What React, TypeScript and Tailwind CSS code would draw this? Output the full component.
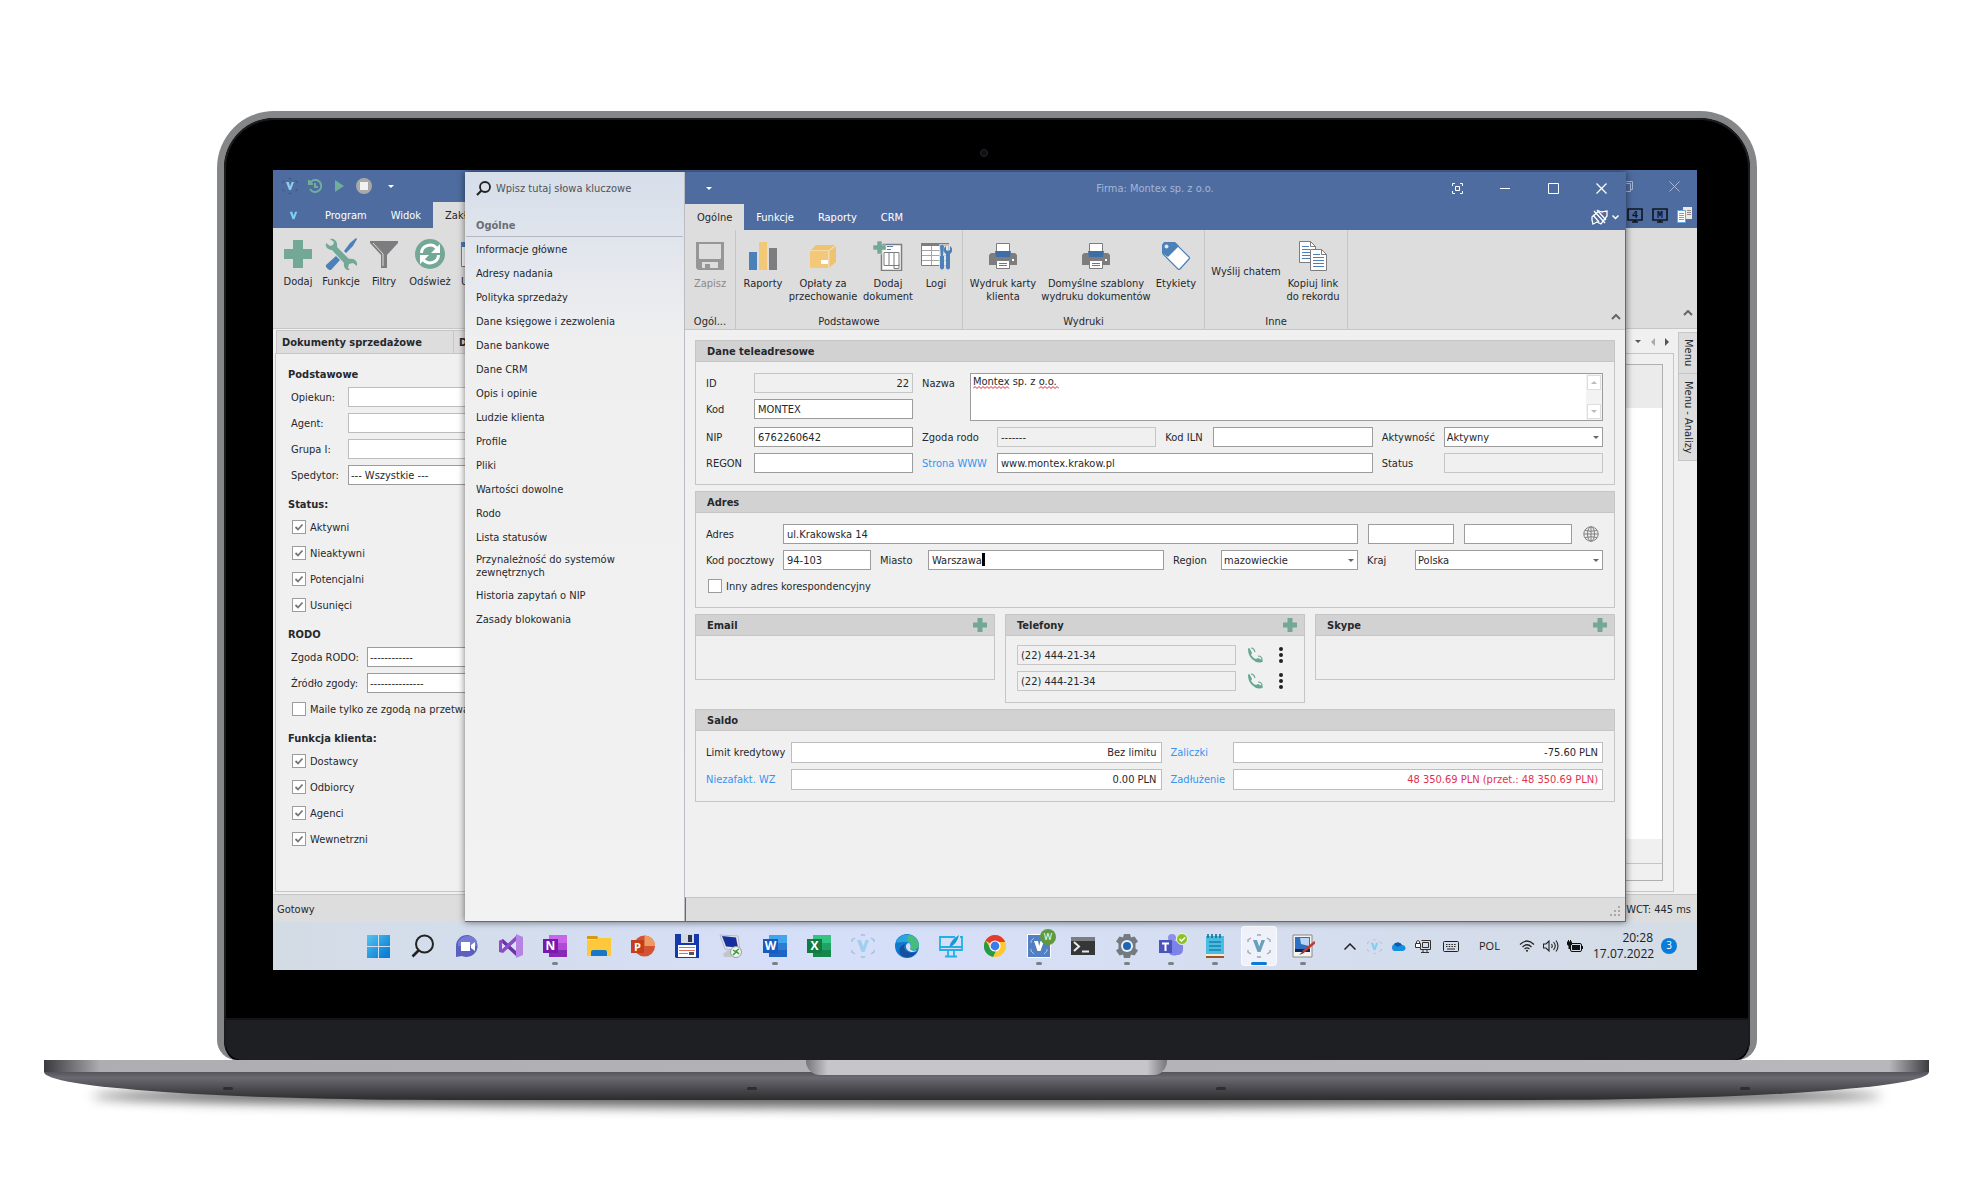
import React from 'react';

const GREEN = '#73a896';
const BLUE = '#4c80b9';
const GREY = '#7d7d7f';

/* ---------- small shared drawings ---------- */

function Caret({ className = '' }: { className?: string }) {
  return (
    <svg className={className} width="6" height="3" viewBox="0 0 6 3" fill="currentColor" aria-hidden="true">
      <path d="M0 0h6L3 3z" />
    </svg>
  );
}

function ChevronUp() {
  return (
    <svg width="10" height="6" viewBox="0 0 10 6" fill="none" stroke="#666" strokeWidth="2" aria-hidden="true">
      <path d="M1 5l4-4 4 4" />
    </svg>
  );
}

function Plus({ size }: { size: number }) {
  return (
    <svg width={size} height={size} viewBox="0 0 28 28" fill={GREEN} aria-hidden="true">
      <path d="M9 0h10v9h9v10h-9v9H9v-9H0V9h9z" />
    </svg>
  );
}

function VLogo({ size, color = '#7fd0ee', frame = '#3c5680' }: { size: number; color?: string; frame?: string }) {
  return (
    <svg width={size} height={size} viewBox="0 0 24 24" aria-hidden="true">
      <g fill="none" stroke={frame} strokeWidth="1.5">
        <path d="M1 8V6l3-2M20 4l3 2v2M23 16v2l-3 2M4 20l-3-2v-2M10 1.5l2-1 2 1M10 22.5l2 1 2-1" />
      </g>
      <path d="M6 6h4l2.200 6.500L14.500 6H18l-4.500 12h-3z" fill={color} />
    </svg>
  );
}

/* ---------- ribbon icons ---------- */

const IconTools = () => (
  <svg width="32" height="32" viewBox="0 0 32 32" aria-hidden="true">
    <path d="M1 27l10-9 4 4-9 10c-2 1-6-3-5-5z" fill={BLUE} />
    <path d="M19 13l6-8 6-5 1 1-4 7-7 7z" fill={BLUE} />
    <path d="M5 1c4-1 8 2 7 8l12 12c6-1 9 3 8 7l-4-3-4 1-1 4 3 3c-5 0-8-4-7-8L7 12c-4 0-7-3-6-7l4 3 3-1 1-3z" fill={GREEN} />
  </svg>
);
const IconFilter = () => (
  <svg width="28" height="28" viewBox="0 0 28 28" aria-hidden="true">
    <path d="M0 1h28v2L17 15v13h-6V15L0 3z" fill={GREY} />
    <path d="M3 3l10 11v12" stroke="#ddd" strokeWidth="1" fill="none" />
  </svg>
);
const IconRefresh = () => (
  <svg width="30" height="30" viewBox="0 0 30 30" aria-hidden="true">
    <circle cx="15" cy="15" r="15" fill={GREEN} />
    <g fill="none" stroke="#fff" strokeWidth="3">
      <path d="M6.500 14a8.500 8 0 0 1 15-5" />
      <path d="M23.500 16a8.500 8 0 0 1-15 5" />
    </g>
    <path d="M25 5v9h-9zM5 25v-9h9z" fill="#fff" />
  </svg>
);
const IconWindow = () => (
  <svg width="28" height="28" viewBox="0 0 28 28" aria-hidden="true">
    <path d="M.5 2.500h27v24H.5z" fill="#fff" stroke={GREY} />
    <path d="M0 2h28v5H0z" fill={BLUE} />
  </svg>
);
const IconSave = () => (
  <svg width="28" height="28" viewBox="0 0 28 28" fill="#969698" aria-hidden="true">
    <path fillRule="evenodd" d="M0 0h28v28H2l-2-2zM3 2v14q0 1 1 1h20q1 0 1-1V2zM6 20v6h16v-6z" />
    <path d="M9 22h5v5H9z" />
  </svg>
);
const IconBars = () => (
  <svg width="28" height="28" viewBox="0 0 28 28" aria-hidden="true">
    <path d="M0 10h8v18H0z" fill={BLUE} />
    <path d="M10 0h8v28h-8z" fill="#f3c979" />
    <path d="M20 6h8v22h-8z" fill={GREY} />
  </svg>
);
const IconBox = () => (
  <svg width="28" height="28" viewBox="0 0 28 28" aria-hidden="true">
    <path d="M1 9h18v17H3l-2-1z" fill="#f3c979" />
    <path d="M2 8l5-5h19l-6 5zM20 9l7-5v16l-7 6z" fill="#efc272" />
    <path d="M2 8.500h18V26M20 8.500l7-5" stroke="#f7dba5" fill="none" />
    <path d="M12 18h7v4h-7z" fill="#fff" />
  </svg>
);
const IconAddDoc = () => (
  <svg width="30" height="30" viewBox="0 0 30 30" aria-hidden="true">
    <path d="M8.500 3.500h20v26h-20z" fill="#fff" stroke={GREY} strokeWidth="1.500" />
    <path d="M11 11.500h15v13H11zM16 11.500v13M21 11.500v16h5v-4" fill="none" stroke={GREY} />
    <path d="M14 5.500h6M14 8.500h4" stroke={BLUE} />
    <path d="M4 0h5v4h4v5H9v4H4V9H0V4h4z" fill={GREEN} stroke="#ddd" strokeWidth=".6" />
  </svg>
);
const IconLogs = () => (
  <svg width="31" height="28" viewBox="0 0 31 28" aria-hidden="true">
    <path d="M.5 2.500h27v21H.5z" fill="#fff" stroke={GREY} />
    <path d="M0 1h28v3H0z" fill={GREY} />
    <path d="M1 8.500h26M1 13.500h26M1 18.500h26M10.500 4v19M19.500 4v19" stroke="#a5a5a5" />
    <path d="M18 2h13v26H18z" fill="#ddd" opacity=".7" />
    <path d="M19 4q2-2 4 0l-1 10h1v12q-2 3-4 0V14h1zM25 4v4l2 1 2-1V4c3 2 3 6 0 8v14q-2 3-4 0V12c-3-2-3-6 0-8z" fill={BLUE} />
  </svg>
);
const IconPrinter = () => (
  <svg width="28" height="26" viewBox="0 0 28 26" aria-hidden="true">
    <path d="M2 10h24l2 2v10H0V12z" fill={GREY} />
    <path d="M7.500.5h13v9h-13z" fill="#fff" stroke={GREY} />
    <path d="M6 8h16l-1 6H7z" fill="#3d6fa6" />
    <path d="M7.500 17.500h13v8h-13z" fill="#fff" stroke={GREY} />
    <path d="M10 20.500h8M10 22.500h8" stroke={BLUE} />
    <path d="M23 16h2v2h-2z" fill="#fff" />
  </svg>
);
const IconTag = () => (
  <svg width="28" height="28" viewBox="0 0 28 28" aria-hidden="true">
    <path d="M3 1h10l14 14q1 1 0 2L18 27q-1 1-2 0L1 12V3z" fill="#fff" stroke={BLUE} strokeWidth="1.200" />
    <path d="M2 0h11l4 4L6 15 0 11V3z" fill={BLUE} />
    <circle cx="4.500" cy="4.500" r="2" fill="#dde6f0" />
  </svg>
);
const IconCopyDocs = () => (
  <svg width="28" height="30" viewBox="0 0 28 30" aria-hidden="true">
    <path d="M.5.5h11l5 5v16H.5z" fill="#fff" stroke={GREY} />
    <path d="M11.500.5v5h5" fill="none" stroke={GREY} />
    <path d="M3 5.500h7M3 8.500h8M3 11.500h8M3 14.500h8M3 17.500h8" stroke={BLUE} />
    <path d="M11.500 8.500h11l5 5v16h-16z" fill="#fff" stroke={GREY} />
    <path d="M22.500 8.500v5h5" fill="none" stroke={GREY} />
    <path d="M14 13.500h7M14 16.500h11M14 19.500h11M14 22.500h11M14 25.500h11" stroke={BLUE} />
  </svg>
);
const IconPhone = () => (
  <svg width="15" height="16" viewBox="0 0 15 16" aria-hidden="true">
    <path d="M0 2q1-2 2 0l2 4-1 2q2 3 5 4l2-1 4 2q2 1 0 2Q9 17 4 12 0 8 0 2z" fill="#66a78f" />
    <path d="M3 1q3 0 4 4M10 9q4 0 4 4" fill="none" stroke="#66a78f" strokeWidth="1.200" />
  </svg>
);
const IconGlobe = () => (
  <svg width="16" height="16" viewBox="0 0 16 16" fill="none" stroke="#808080" aria-hidden="true">
    <circle cx="8" cy="8" r="7.200" />
    <ellipse cx="8" cy="8" rx="3.500" ry="7.200" />
    <path d="M8 1v14M1 8h14M2 4.500q6 1.500 12 0M2 11.500q6-1.500 12 0" />
  </svg>
);

/* ---------- form building blocks ---------- */

type FieldProps = { id: string; label: string; value?: string; readOnly?: boolean; right?: boolean; red?: boolean; className?: string };

function Field({ id, label, value = '', readOnly = false, right = false, red = false, className = '' }: FieldProps) {
  return (
    <input
      id={id}
      aria-label={label}
      defaultValue={value}
      readOnly={readOnly}
      className={`block h-5 w-full min-w-0 border px-[3px] outline-none ${readOnly ? 'border-[#c6c6c6] bg-[#f0f0f0]' : 'border-[#9c9c9c] bg-white'} ${right ? 'text-right' : ''} ${red ? 'text-[#e0314f]' : ''} ${className}`}
    />
  );
}

function Select({ id, label, value, className = '' }: { id: string; label: string; value: string; className?: string }) {
  return (
    <div className={`relative min-w-0 ${className}`}>
      <select id={id} aria-label={label} className="block h-5 w-full appearance-none border border-[#9c9c9c] bg-white px-0.5 outline-none">
        <option>{value}</option>
      </select>
      <Caret className="pointer-events-none absolute top-[9px] right-1 text-[#666]" />
    </div>
  );
}

function Section({ title, add = false, children }: { title: string; add?: boolean; children?: React.ReactNode }) {
  return (
    <section className="border border-[#c6c6c6]">
      <header className="flex h-[21px] items-center justify-between border-b border-[#c6c6c6] bg-[#d2d2d2] pr-[7px] pl-[11px]">
        <h2 className="font-bold">{title}</h2>
        {add && (
          <button type="button" aria-label={`${title}: dodaj`}>
            <Plus size={14} />
          </button>
        )}
      </header>
      {children}
    </section>
  );
}

function Check({ label, checked = false }: { label: string; checked?: boolean }) {
  return (
    <label className="flex h-5 items-center gap-1 whitespace-nowrap">
      <span className="relative block size-3.5 flex-none">
        <input type="checkbox" defaultChecked={checked} className="peer block size-3.5 appearance-none border border-[#9c9c9c] bg-white" />
        <svg className="pointer-events-none absolute inset-0 hidden peer-checked:block" width="14" height="14" viewBox="0 0 14 14" fill="none" stroke="#777" strokeWidth="1.800" aria-hidden="true">
          <path d="M3.500 7l2.500 2.500L10.500 4.500" />
        </svg>
      </span>
      {label}
    </label>
  );
}

function RibbonButton({ icon, lines, width, muted = false }: { icon: React.ReactNode; lines: string[]; width: string; muted?: boolean }) {
  return (
    <button type="button" className={`flex flex-none flex-col items-center whitespace-nowrap leading-[13px] ${width} ${muted ? 'text-[#8a8a8a]' : ''}`}>
      <span className="mb-1.5 flex h-[30px] items-center justify-center">{icon}</span>
      {lines.map((l) => (
        <span key={l}>{l}</span>
      ))}
    </button>
  );
}

function RibbonGroup({ title, width, pad, children }: { title: string; width: string; pad: string; children: React.ReactNode }) {
  return (
    <div className={`flex flex-none flex-col border-r border-[#c6c6c6] ${width}`}>
      <div className={`flex flex-1 items-start pt-[11px] ${pad}`}>{children}</div>
      <div className="h-3.5 truncate text-center">{title}</div>
    </div>
  );
}

/* ---------- background window ---------- */

function BackWindow() {
  return (
    <div className="flex h-full flex-col bg-[#f0f0f0]">
      <div className="flex h-8 flex-none items-center justify-between bg-[#4e6c9f] pr-[17px] pl-[9px]">
        <div className="flex items-center">
          <VLogo size={16} color="#8ecbe6" />
          <svg className="ml-2.5" width="14" height="14" viewBox="0 0 14 14" fill="none" stroke="#6fae98" strokeWidth="2" aria-hidden="true">
            <path d="M1 1v4h4M1.500 5A6 6 0 1 1 2 10M7 4v4h3" />
          </svg>
          <svg className="ml-[13px]" width="9" height="12" viewBox="0 0 9 12" fill="#6fae98" aria-hidden="true">
            <path d="M0 0l9 6-9 6z" />
          </svg>
          <svg className="ml-3" width="16" height="16" viewBox="0 0 16 16" aria-hidden="true">
            <circle cx="8" cy="8" r="8" fill="#a9a9a9" />
            <path d="M4 4h8v8H4z" fill="#f2f2f2" />
          </svg>
          <Caret className="ml-4 text-white" />
        </div>
        <div className="flex items-center gap-9 text-[#a5b5d2]">
          <svg width="11" height="11" viewBox="0 0 11 11" fill="none" stroke="currentColor" aria-hidden="true">
            <path d="M.5 2.500h8v8h-8zM2.500 2.500v-2h8v8h-2" />
          </svg>
          <svg width="11" height="11" viewBox="0 0 11 11" fill="none" stroke="currentColor" aria-hidden="true">
            <path d="M.5.5l10 10M10.500.5l-10 10" />
          </svg>
        </div>
      </div>
      <div className="flex h-[26px] flex-none items-stretch justify-between bg-[#4e6c9f] text-white">
        <nav className="flex items-stretch">
          <span className="flex w-10 items-center justify-center">
            <VLogo size={15} frame="#4e6c9f" />
          </span>
          <button type="button" className="px-3">Program</button>
          <button type="button" className="px-3">Widok</button>
          <button type="button" className="bg-[#ddd] px-3 text-[#26282c]">Zakł</button>
        </nav>
        <div className="flex items-center gap-[9px] pr-[5px]">
          {['4', 'M'].map((t) => (
            <svg key={t} width="16" height="15" viewBox="0 0 16 15" aria-hidden="true">
              <path d="M1 1h14v11H1zM5 14h6M8 12v2" fill="none" stroke="#10141c" strokeWidth="1.600" />
              <text x="8" y="10" fontSize="10" fontWeight="700" textAnchor="middle" fontFamily="Liberation Mono, monospace" fill="#10141c">{t}</text>
            </svg>
          ))}
          <svg width="15" height="16" viewBox="0 0 15 16" aria-hidden="true">
            <path d="M6 0h9v12H6z" fill="#efe9df" />
            <path d="M10 3.500h4M10 5.500h4M10 7.500h4" stroke="#8d8a85" />
            <path d="M.5 3.500h8v12h-8z" fill="#fff" stroke="#67a5e0" />
            <path d="M2 6.500h5M2 8.500h5M2 10.500h5M2 12.500h5" stroke="#67a5e0" />
          </svg>
        </div>
      </div>
      <div className="flex h-[101px] flex-none justify-between border-b border-[#c6c6c6] bg-[#ddd] pt-[11px] pl-[3px]">
        <div className="flex items-start">
          <RibbonButton icon={<Plus size={28} />} lines={['Dodaj']} width="w-11" />
          <RibbonButton icon={<IconTools />} lines={['Funkcje']} width="w-[42px]" />
          <RibbonButton icon={<IconFilter />} lines={['Filtry']} width="w-11" />
          <RibbonButton icon={<IconRefresh />} lines={['Odśwież']} width="w-12" />
          <button type="button" className="ml-[7px] flex w-7 flex-col items-start leading-[13px]">
            <span className="mb-1.5 flex h-[30px] items-center"><IconWindow /></span>
            <span className="w-1 overflow-hidden">U</span>
          </button>
        </div>
        <div className="self-end pr-1 pb-3">
          <ChevronUp />
        </div>
      </div>

      <div className="flex min-h-0 flex-1">
        <div className="flex min-w-0 flex-1 flex-col pl-0.5">
          <div className="flex h-6 flex-none items-stretch justify-between pt-px">
            <div className="flex pl-px font-bold">
              <div className="flex w-[178px] items-center border border-b-0 border-[#c6c6c6] bg-[#ddd] pl-[5px]">Dokumenty sprzedażowe</div>
              <div className="flex w-12 items-center border border-b-0 border-l-0 border-[#c6c6c6] bg-[#ddd] pl-[5px]">
                <span className="w-1.5 overflow-hidden">D</span>
              </div>
            </div>
            <div className="flex items-center gap-2.5 pr-[5px] text-[#555]">
              <Caret />
              <svg width="4" height="8" viewBox="0 0 4 8" fill="#aaa" aria-hidden="true"><path d="M4 0v8L0 4z" /></svg>
              <svg width="4" height="8" viewBox="0 0 4 8" fill="#555" aria-hidden="true"><path d="M0 0v8l4-4z" /></svg>
            </div>
          </div>
          <div className="mb-0.5 flex min-h-0 flex-1 border border-[#c6c6c6]">
            <form className="w-[240px] flex-none overflow-hidden pl-3">
              <h3 className="mt-[11px] h-5 font-bold leading-5">Podstawowe</h3>
              <div className="mt-0.5 ml-[3px] grid grid-cols-[57px_1fr] items-center gap-y-1.5">
                <label htmlFor="opiekun">Opiekun:</label>
                <Field id="opiekun" label="Opiekun" className="border-[#bdbdbd]!" />
                <label htmlFor="agent">Agent:</label>
                <Field id="agent" label="Agent" className="border-[#bdbdbd]!" />
                <label htmlFor="grupa">Grupa I:</label>
                <Field id="grupa" label="Grupa I" className="border-[#bdbdbd]!" />
                <label htmlFor="spedytor">Spedytor:</label>
                <Select id="spedytor" label="Spedytor" value="--- Wszystkie ---" />
              </div>
              <h3 className="mt-2.5 h-5 font-bold leading-5">Status:</h3>
              <div className="mt-0.5 flex flex-col gap-1.5 pl-1">
                <Check label="Aktywni" checked />
                <Check label="Nieaktywni" checked />
                <Check label="Potencjalni" checked />
                <Check label="Usunięci" checked />
              </div>
              <h3 className="mt-2.5 h-5 font-bold leading-5">RODO</h3>
              <div className="mt-0.5 ml-[3px] grid grid-cols-[76px_1fr] items-center gap-y-1.5">
                <label htmlFor="zgodaRodo">Zgoda RODO:</label>
                <Select id="zgodaRodo" label="Zgoda RODO" value="------------" />
                <label htmlFor="zrodlo">Źródło zgody:</label>
                <Select id="zrodlo" label="Źródło zgody" value="---------------" />
              </div>
              <div className="mt-1.5 pl-1">
                <Check label="Maile tylko ze zgodą na przetwar" />
              </div>
              <h3 className="mt-2.5 h-5 font-bold leading-5">Funkcja klienta:</h3>
              <div className="mt-0.5 flex flex-col gap-1.5 pl-1">
                <Check label="Dostawcy" checked />
                <Check label="Odbiorcy" checked />
                <Check label="Agenci" checked />
                <Check label="Wewnetrzni" checked />
              </div>
            </form>
            <div className="mt-2.5 mr-2.5 mb-2.5 flex flex-1 flex-col border border-[#b0b0b0] bg-white">
              <div className="h-[43px] bg-[#ebebeb]" />
              <div className="flex-1" />
              <div className="h-[25px] border-b border-[#c6c6c6] bg-[#f0f0f0]" />
              <div className="h-4 bg-[#f0f0f0]" />
            </div>
          </div>
        </div>
        <aside className="w-[23px] flex-none pt-[3px] pl-1 text-[#26282c]">
          <button type="button" className="flex h-[42px] w-full items-center justify-center border border-r-0 border-[#c6c6c6] bg-[#ddd] [writing-mode:vertical-rl]">Menu</button>
          <button type="button" className="flex h-[87px] w-full items-center justify-center border border-t-0 border-r-0 border-[#c6c6c6] bg-[#ddd] [writing-mode:vertical-rl]">Menu - Analizy</button>
        </aside>
      </div>
      <footer className="flex h-7 flex-none items-center justify-between border-t border-[#c6c6c6] bg-[#ddd] pt-0.5 pr-1.5 pl-1">
        <span>Gotowy</span>
        <span>WCT: 445 ms</span>
      </footer>
    </div>
  );
}

/* ---------- company window ---------- */

const MENU = [
  'Informacje główne', 'Adresy nadania', 'Polityka sprzedaży', 'Dane księgowe i zezwolenia', 'Dane bankowe', 'Dane CRM',
  'Opis i opinie', 'Ludzie klienta', 'Profile', 'Pliki', 'Wartości dowolne', 'Rodo', 'Lista statusów',
  'Przynależność do systemów zewnętrznych', 'Historia zapytań o NIP', 'Zasady blokowania',
];

function SideMenu() {
  return (
    <aside className="flex w-[220px] flex-none flex-col border-r border-[#b9bcc2] bg-linear-to-b from-[#d6deea] via-[#efeff0] via-22% to-[#f2f2f2]">
      <div className="flex h-8 items-center gap-[5px] pl-[11px]">
        <svg width="15" height="15" viewBox="0 0 15 15" fill="none" stroke="#222" strokeWidth="1.800" aria-hidden="true">
          <circle cx="9" cy="6" r="5" />
          <path d="M5.500 9.500L1 14" strokeWidth="2.200" />
        </svg>
        <input aria-label="Szukaj" placeholder="Wpisz tutaj słowa kluczowe" className="min-w-0 flex-1 bg-transparent outline-none placeholder:text-[#505358]" />
      </div>
      <h2 className="mx-px mt-3 h-[21px] border-b border-[#b4b8be] pl-2.5 font-bold leading-[19px] text-[#6b6e73]">Ogólne</h2>
      <ul>
        {MENU.map((m) => (
          <li key={m} className="flex min-h-6 items-center py-1 pr-12 pl-[11px] leading-[13px]">
            <a href="#menu">{m}</a>
          </li>
        ))}
      </ul>
    </aside>
  );
}

function CompanyForm() {
  return (
    <main className="flex min-h-0 flex-1 flex-col gap-1.5 bg-[#f0f0f0] px-2.5 pt-2.5">
      <Section title="Dane teleadresowe">
        <div className="grid grid-cols-[207fr_681fr] gap-[9px] py-[11px] pr-[11px] pl-2.5">
          <div className="flex flex-col gap-1.5">
            <div className="grid h-12 grid-cols-[48px_1fr] content-start items-center gap-y-1.5">
              <label htmlFor="id">ID</label>
              <Field id="id" label="ID" value="22" readOnly right />
              <label htmlFor="kod">Kod</label>
              <Field id="kod" label="Kod" value="MONTEX" />
            </div>
            <div className="grid grid-cols-[48px_1fr] items-center gap-y-1.5">
              <label htmlFor="nip">NIP</label>
              <Field id="nip" label="NIP" value="6762260642" />
              <label htmlFor="regon">REGON</label>
              <Field id="regon" label="REGON" />
            </div>
          </div>
          <div className="flex flex-col gap-1.5">
            <div className="flex">
              <label htmlFor="nazwa" className="w-12 flex-none pt-1">Nazwa</label>
              <div className="relative flex h-12 flex-1 border border-[#9c9c9c] bg-white">
                <textarea id="nazwa" spellCheck={false} defaultValue="Montex sp. z o.o." className="min-w-0 flex-1 resize-none px-0.5 leading-[15px] outline-none" />
                <svg className="pointer-events-none absolute top-3 left-0.5" width="86" height="3" viewBox="0 0 86 3" fill="none" stroke="#e0202f" aria-hidden="true">
                  <path d="M0 2.500l2-2 2 2 2-2 2 2 2-2 2 2 2-2 2 2 2-2 2 2 2-2 2 2 2-2 2 2 2-2 2 2 2-2 2 2M66 2.500l2-2 2 2 2-2 2 2 2-2 2 2 2-2 2 2 2-2 2 2" />
                </svg>
                <div className="flex w-4 flex-col justify-between bg-[#f3f3f3] p-px text-[#bbb]">
                  <span className="flex h-[15px] items-center justify-center border border-[#ddd] bg-white"><Caret className="rotate-180" /></span>
                  <span className="flex h-[15px] items-center justify-center border border-[#ddd] bg-white"><Caret /></span>
                </div>
              </div>
            </div>
            <div className="grid grid-cols-[75px_1fr_57px_1fr_71px_1fr] items-center gap-y-1.5">
              <label htmlFor="zgoda">Zgoda rodo</label>
              <Field id="zgoda" label="Zgoda rodo" value="-------" readOnly />
              <label htmlFor="iln" className="pl-[9px]">Kod ILN</label>
              <Field id="iln" label="Kod ILN" />
              <label htmlFor="aktywnosc" className="pl-[9px]">Aktywność</label>
              <Select id="aktywnosc" label="Aktywność" value="Aktywny" />
              <a href="#www" className="text-[#3594f0]">Strona WWW</a>
              <Field id="www" label="Strona WWW" value="www.montex.krakow.pl" className="col-span-3" />
              <label htmlFor="status" className="pl-[9px]">Status</label>
              <Field id="status" label="Status" readOnly />
            </div>
          </div>
        </div>
      </Section>

      <Section title="Adres">
        <div className="flex flex-col gap-1.5 py-[11px] pr-[11px] pl-2.5">
          <div className="flex items-center">
            <label htmlFor="ulica" className="w-[77px] flex-none">Adres</label>
            <div className="grid flex-1 grid-cols-[575fr_86fr_108fr] gap-2.5">
              <Field id="ulica" label="Adres" value="ul.Krakowska 14" />
              <Field id="dom" label="Numer domu" />
              <Field id="lokal" label="Numer lokalu" />
            </div>
            <button type="button" aria-label="Mapa" className="flex w-[31px] justify-center pl-1.5">
              <IconGlobe />
            </button>
          </div>
          <div className="grid grid-cols-[77px_88fr_57px_236fr_57px_137fr_57px_188fr] items-center">
            <label htmlFor="pocztowy" className="whitespace-nowrap">Kod pocztowy</label>
            <Field id="pocztowy" label="Kod pocztowy" value="94-103" />
            <label htmlFor="miasto" className="pl-[9px]">Miasto</label>
            <div className="relative">
              <Field id="miasto" label="Miasto" value="Warszawa" />
              <span className="absolute top-[3px] left-[54px] h-[13px] w-[3px] bg-black" />
            </div>
            <label htmlFor="region" className="pl-[9px]">Region</label>
            <Select id="region" label="Region" value="mazowieckie" />
            <label htmlFor="kraj" className="pl-[9px]">Kraj</label>
            <Select id="kraj" label="Kraj" value="Polska" />
          </div>
          <div className="pl-0.5">
            <Check label="Inny adres korespondencyjny" />
          </div>
        </div>
      </Section>

      <div className="grid grid-cols-3 items-start gap-2.5">
        <Section title="Email" add>
          <div className="h-[43px]" />
        </Section>
        <Section title="Telefony" add>
          <div className="flex flex-col gap-1.5 pt-[9px] pr-[21px] pb-[11px] pl-[11px]">
            {[1, 2].map((n) => (
              <div key={n} className="flex items-center">
                <Field id={`tel${n}`} label={`Telefon ${n}`} value="(22) 444-21-34" readOnly />
                <button type="button" aria-label="Zadzwoń" className="ml-3 flex-none"><IconPhone /></button>
                <button type="button" aria-label="Więcej" className="ml-4 flex-none">
                  <svg width="4" height="16" viewBox="0 0 4 16" fill="#222"><circle cx="2" cy="2" r="2" /><circle cx="2" cy="8" r="2" /><circle cx="2" cy="14" r="2" /></svg>
                </button>
              </div>
            ))}
          </div>
        </Section>
        <Section title="Skype" add>
          <div className="h-[43px]" />
        </Section>
      </div>

      <Section title="Saldo">
        <div className="grid grid-cols-[85px_1fr_71px_1fr] items-center gap-y-1.5 py-[11px] pr-[11px] pl-2.5">
          <label htmlFor="limit" className="whitespace-nowrap">Limit kredytowy</label>
          <Field id="limit" label="Limit kredytowy" value="Bez limitu" right className="h-[21px]! border-[#bdbdbd]! px-1!" />
          <a href="#zaliczki" className="pl-[9px] text-[#3594f0]">Zaliczki</a>
          <Field id="zaliczki" label="Zaliczki" value="-75.60 PLN" right className="h-[21px]! border-[#bdbdbd]! px-1!" />
          <a href="#wz" className="text-[#3594f0]">Niezafakt. WZ</a>
          <Field id="wz" label="Niezafakt. WZ" value="0.00 PLN" right className="h-[21px]! border-[#bdbdbd]! px-1!" />
          <a href="#zadluzenie" className="pl-[9px] text-[#3594f0]">Zadłużenie</a>
          <Field id="zadluzenie" label="Zadłużenie" value="48 350.69 PLN (przet.: 48 350.69 PLN)" right red className="h-[21px]! border-[#bdbdbd]! px-1!" />
        </div>
      </Section>
    </main>
  );
}

function CompanyWindow() {
  return (
    <div className="absolute top-0.5 right-[71px] bottom-0 left-48 flex border-b border-[#4e6c9f] shadow-[0_0_7px_rgba(0,0,0,0.55)]">
      <SideMenu />
      <div className="flex min-w-0 flex-1 flex-col border-r border-[#4e6c9f]">
        <header className="grid h-8 flex-none grid-cols-[1fr_auto_1fr] items-center bg-[#4e6c9f] text-white">
          <Caret className="ml-[21px]" />
          <h1 className="text-[#a3b6d8]">Firma: Montex sp. z o.o.</h1>
          <div className="flex justify-end">
            <button type="button" aria-label="Pełny ekran" className="flex w-12 justify-center">
              <svg width="11" height="11" viewBox="0 0 11 11" fill="none" stroke="currentColor"><path d="M.5 3V.5H3M8 .5h2.500V3M10.500 8v2.500H8M3 10.500H.5V8M3.500 3.500h4v4h-4z" /></svg>
            </button>
            <button type="button" aria-label="Minimalizuj" className="flex w-12 justify-center">
              <svg width="10" height="11" viewBox="0 0 10 11" stroke="currentColor"><path d="M0 5.500h10" /></svg>
            </button>
            <button type="button" aria-label="Maksymalizuj" className="flex w-12 justify-center">
              <svg width="11" height="11" viewBox="0 0 11 11" fill="none" stroke="currentColor"><path d="M.5.5h10v10H.5z" /></svg>
            </button>
            <button type="button" aria-label="Zamknij" className="flex w-12 justify-center">
              <svg width="11" height="11" viewBox="0 0 11 11" fill="none" stroke="currentColor" strokeWidth="1.300"><path d="M.5.5l10 10M10.500.5l-10 10" /></svg>
            </button>
          </div>
        </header>
        <nav className="flex h-[26px] flex-none items-stretch justify-between bg-[#4e6c9f] text-white">
          <div className="flex">
            <button type="button" className="bg-[#ddd] px-3 text-[#26282c]">Ogólne</button>
            <button type="button" className="px-3">Funkcje</button>
            <button type="button" className="px-3">Raporty</button>
            <button type="button" className="px-3">CRM</button>
          </div>
          <button type="button" aria-label="Wygląd" className="flex items-center gap-1 pr-1.5">
            <svg width="17" height="16" viewBox="0 0 17 16" fill="none" stroke="#fff" strokeWidth="1.300" aria-hidden="true">
              <path d="M1 8l7-6 3 1 5-1v5l-6 8-4-2-4 2-1-4z" />
              <path d="M3 2l11 12M6 1l9 10M2 6l6 7" />
              <path d="M2 11l3 2-3 1z" fill="#4f8f7d" stroke="none" />
              <path d="M12 3l3 0-1 3z" fill="#9a5a6a" stroke="none" />
            </svg>
            <svg width="7" height="5" viewBox="0 0 7 5" fill="none" stroke="#fff" strokeWidth="1.500" aria-hidden="true"><path d="M.5.5l3 3 3-3" /></svg>
          </button>
        </nav>
        <div className="flex h-[100px] flex-none border-b border-[#c6c6c6] bg-[#ddd]">
          <RibbonGroup title="Ogól..." width="w-[51px]" pad="pl-px">
            <RibbonButton icon={<IconSave />} lines={['Zapisz']} width="w-12" muted />
          </RibbonGroup>
          <RibbonGroup title="Podstawowe" width="w-[227px]" pad="pl-[3px]">
            <RibbonButton icon={<IconBars />} lines={['Raporty']} width="w-12" />
            <RibbonButton icon={<IconBox />} lines={['Opłaty za', 'przechowanie']} width="w-[72px]" />
            <RibbonButton icon={<IconAddDoc />} lines={['Dodaj', 'dokument']} width="w-[58px]" />
            <RibbonButton icon={<IconLogs />} lines={['Logi']} width="w-[38px]" />
          </RibbonGroup>
          <RibbonGroup title="Wydruki" width="w-[242px]" pad="pl-1">
            <RibbonButton icon={<IconPrinter />} lines={['Wydruk karty', 'klienta']} width="w-[72px]" />
            <RibbonButton icon={<IconPrinter />} lines={['Domyślne szablony', 'wydruku dokumentów']} width="w-[114px]" />
            <RibbonButton icon={<IconTag />} lines={['Etykiety']} width="w-[46px]" />
          </RibbonGroup>
          <RibbonGroup title="Inne" width="w-[143px]" pad="pl-[3px]">
            <button type="button" className="h-[60px] w-[76px] whitespace-nowrap">Wyślij chatem</button>
            <RibbonButton icon={<IconCopyDocs />} lines={['Kopiuj link', 'do rekordu']} width="w-[58px]" />
          </RibbonGroup>
          <div className="flex flex-1 items-end justify-end pr-1 pb-[9px]">
            <ChevronUp />
          </div>
        </div>
        <CompanyForm />
        <footer className="flex h-6 flex-none items-end justify-end border-t border-l border-t-[#c6c6c6] border-l-[#4e6c9f] bg-[#ddd] p-1">
          <svg width="11" height="11" viewBox="0 0 11 11" fill="#a9a9a9" aria-hidden="true">
            <path d="M8 0h2v2H8zM4 4h2v2H4zM8 4h2v2H8zM0 8h2v2H0zM4 8h2v2H4zM8 8h2v2H8z" />
          </svg>
        </footer>
      </div>
    </div>
  );
}

/* ---------- taskbar ---------- */

function OfficeIcon({ letter, dark, mid, light }: { letter: string; dark: string; mid: string; light: string }) {
  return (
    <svg width="24" height="24" viewBox="0 0 24 24" aria-hidden="true">
      <path d="M6 1h18v22H6z" fill={mid} />
      <path d="M6 1h18v8H6z" fill={light} />
      <path d="M15 16h9v7H6v-5z" fill={dark} opacity=".7" />
      <path d="M0 5h15v14H0z" fill={dark} />
      <text x="7.500" y="16" fontSize="12" fontWeight="700" textAnchor="middle" fontFamily="Open Sans, sans-serif" fill="#fff">{letter}</text>
    </svg>
  );
}

const TASKS: { name: string; dot?: boolean; active?: boolean; icon: React.ReactNode }[] = [
  { name: 'Start', icon: <svg width="24" height="24" viewBox="0 0 24 24"><defs><linearGradient id="win" gradientUnits="userSpaceOnUse" x1="0" y1="0" x2="20" y2="20"><stop stopColor="#55c6f0" /><stop offset="1" stopColor="#0a7fd6" /></linearGradient></defs><path fill="url(#win)" d="M0 1h11v11H0zM12 1h11v11H12zM0 13h11v11H0zM12 13h11v11H12z" /></svg> },
  { name: 'Szukaj', icon: <svg width="24" height="24" viewBox="0 0 24 24" fill="none" stroke="#222" strokeWidth="2"><circle cx="13.500" cy="10" r="8.500" /><path d="M8 16L1.500 22.500" strokeWidth="2.600" /></svg> },
  { name: 'Czat', icon: <svg width="24" height="24" viewBox="0 0 24 24"><path d="M12 1a11 11 0 1 1-5 21l-6 1V12A11 11 0 0 1 12 1z" fill="#5b5fc0" /><path d="M3 8a11 11 0 0 1 19-1v5H3z" fill="#8189d8" opacity=".7" /><path d="M6 8h9v9H6zM16 11l4-3v9l-4-3z" fill="#fff" /></svg> },
  { name: 'Visual Studio', icon: <svg width="24" height="24" viewBox="0 0 24 24"><path d="M0 7l4-2 14 13v5L3 9v7l-3 2z" fill="#6a33a5" /><path d="M4 19l14-13V1L3 15l1-9-4 1v11z" fill="#8b4cc8" /><path d="M17 0l7 3v18l-7 3z" fill="#b683e4" /><path d="M3 9v6l3.500-3zM17 8l-5 4 5 4z" fill="#d8e0f8" /></svg> },
  { name: 'OneNote', dot: true, icon: <OfficeIcon letter="N" dark="#7719aa" mid="#ae4bd5" light="#ca64ea" /> },
  { name: 'Eksplorator', icon: <svg width="24" height="24" viewBox="0 0 24 24"><path d="M0 2h10l2 3H0z" fill="#d9980f" /><path d="M0 6h8l3-2h13v18H0z" fill="#fdc93a" /><path d="M4 22v-4q0-2 2-2h12q2 0 2 2v4z" fill="#1778c8" /></svg> },
  { name: 'PowerPoint', icon: <svg width="24" height="24" viewBox="0 0 24 24"><circle cx="13.500" cy="12" r="10.500" fill="#d35230" /><path d="M13.500 1.500A10.500 10.500 0 0 1 24 12H13.500z" fill="#ee9b63" /><path d="M0 6h13v13H0z" fill="#c43e1c" /><text x="6.500" y="16.500" fontSize="11" fontWeight="700" textAnchor="middle" fontFamily="Open Sans, sans-serif" fill="#fff">P</text></svg> },
  { name: 'Commander', icon: <svg width="24" height="24" viewBox="0 0 24 24"><path d="M0 0h24v24H1l-1-1z" fill="#1638ad" /><path d="M6 0h13v9H6z" fill="#d5dae2" /><path d="M13 1h4v7h-4z" fill="#2b3550" /><path d="M3 11h18v12H3z" fill="#fff" /><path d="M4 13.500h16M4 16.500h16M4 19.500h9" stroke="#e26a5f" /><path d="M14 18h5v3h-5z" fill="#555" /></svg> },
  { name: 'Pulpit zdalny', icon: <svg width="24" height="24" viewBox="0 0 24 24"><path d="M1 1l18 1 2 14-15-1z" fill="#e4e6eb" stroke="#a9adb8" strokeWidth=".8" /><path d="M3 2l14 1.500 2 10-12-1z" fill="#15309c" /><path d="M4 20l5-4 8 2-2 5H5z" fill="#c3c5ca" /><circle cx="17" cy="18" r="5.500" fill="#eef3ee" stroke="#9a9a9a" /><path d="M14 16l3 2-3 3M20 15l-3 2 3 3" fill="none" stroke="#3b9b3b" strokeWidth="1.500" /></svg> },
  { name: 'Word', dot: true, icon: <OfficeIcon letter="W" dark="#185abd" mid="#2b7cd3" light="#41a5ee" /> },
  { name: 'Excel', icon: <OfficeIcon letter="X" dark="#107c41" mid="#21a366" light="#33c481" /> },
  { name: 'Vendo', icon: <VLogo size={24} color="#9fd0ee" frame="#a9bfe4" /> },
  { name: 'Edge', icon: <svg width="24" height="24" viewBox="0 0 24 24"><circle cx="12" cy="12" r="12" fill="#0f78cf" /><path d="M1 8a12 12 0 0 1 23 3c0 5-6 6-9 4 2-4-1-7-5-7S2 9 1 8z" fill="#2ba6dc" /><path d="M13 1c6 0 11 5 11 10 0 4-5 6-9 4 2-3 1-7-3-9z" fill="#4bbf6e" opacity=".85" /><path d="M10 10c-3 5 2 11 12 8-4 6-12 7-16 3-4-5 0-10 4-11z" fill="#14509e" /><path d="M15 15c1-2 1-4-1-6-4 0-5 7 2 9 2 0 4 0 6-2-3 1-5 1-7-1z" fill="#d8ddf2" /></svg> },
  { name: 'Prezentacje', icon: <svg width="24" height="24" viewBox="0 0 24 24" fill="none" stroke="#22b0e6" strokeWidth="1.800"><path d="M16 3H1v13h22V3h-2M1 13h22M9 17v5M15 17v5M6 22.500h12" /><path d="M20 1q-8 5-9 10l-1 2 3-1q5-3 7-11z" fill="#1899d6" stroke="none" /></svg> },
  { name: 'Chrome', icon: <svg width="24" height="24" viewBox="0 0 24 24"><circle cx="12" cy="12" r="11" fill="#fcc931" /><path d="M12 12L2.500 6.500a11 11 0 0 1 19 0L22 8H12z" fill="#e33b2e" /><path d="M2.500 6.500L8 15l5 2-3 6A11 11 0 0 1 2.500 6.500z" fill="#259a4b" /><circle cx="12" cy="12" r="5.600" fill="#fff" /><circle cx="12" cy="12" r="4.400" fill="#3b7de8" /></svg> },
  { name: 'Vendo ERP', dot: true, icon: <svg className="overflow-visible" width="24" height="24" viewBox="0 0 24 24"><path d="M.5.5h23v23H.5z" fill="#5280c2" stroke="#fff" /><path d="M7 7h4l1.200 5L13.500 7H17l-3.500 10h-3z" fill="#fff" /><path d="M4 9V7l3-3M4 15v2l3 3M20 15v2l-3 3" fill="none" stroke="#a9c3e8" /><circle cx="21" cy="3" r="8" fill="#5f9a3e" /><text x="21" y="6" fontSize="9" textAnchor="middle" fontFamily="Open Sans, sans-serif" fill="#fff">W</text></svg> },
  { name: 'Terminal', icon: <svg width="24" height="24" viewBox="0 0 24 24"><path d="M0 4q0-1 1-1h22q1 0 1 1v17H0z" fill="#353637" /><path d="M0 4q0-1 1-1h22q1 0 1 1v3H0z" fill="#7b7d82" /><path d="M3 8l5 4.500L3 17M11 17.500h7" fill="none" stroke="#e8e8e8" strokeWidth="2" /></svg> },
  { name: 'Ustawienia', dot: true, icon: <svg width="24" height="24" viewBox="0 0 24 24"><path d="M9 0h6l1 3.500 3.500-1 3.500 5-2.500 2v5l2.500 2-3.500 5-3.500-1L15 24H9l-1-3.500-3.500 1L1 16.500l2.500-2v-5L1 7.500l3.500-5 3.500 1z" fill="#737a80" /><circle cx="12" cy="12" r="6" fill="#e8f0fa" /><circle cx="12" cy="12" r="4" fill="#1b66b8" /></svg> },
  { name: 'Teams', dot: true, icon: <svg className="overflow-visible" width="24" height="24" viewBox="0 0 24 24"><circle cx="13" cy="4" r="4" fill="#8d8fe8" /><path d="M9 7h15v8q0 6-6 6-7 2-9-4z" fill="#7b83eb" /><path d="M0 6h13v13H0z" fill="#4b53bc" /><path d="M3 9.500h7M6.500 9.500V17" stroke="#fff" strokeWidth="2" /><circle cx="23" cy="5" r="5.500" fill="#8cc21e" stroke="#eee" /><path d="M20.500 5l2 2 3.500-3.500" fill="none" stroke="#fff" strokeWidth="1.500" /></svg> },
  { name: 'Notatnik', dot: true, icon: <svg width="24" height="24" viewBox="0 0 24 24"><path d="M3 2h18v20H3z" fill="#49bde0" /><path d="M3 20h18v3H3z" fill="#f4ead8" /><path d="M3 22h18v2H3z" fill="#a3531f" /><path d="M5 0v4M9 0v4M13 0v4M17 0v4" stroke="#17638c" strokeWidth="1.500" /><path d="M6 8h12M6 12h12M6 16h12" stroke="#1b7fae" strokeWidth="1.500" /></svg> },
  { name: 'Vendo aktywne', active: true, icon: <VLogo size={24} color="#6aa0bd" frame="#a9acb4" /> },
  { name: 'Paint', dot: true, icon: <svg width="24" height="24" viewBox="0 0 24 24"><path d="M2 1h19v22H2z" fill="#f3f3f3" stroke="#888" /><path d="M4 3h15v12H4z" fill="#2f6fc4" /><path d="M9 4h9v8l-8-2z" fill="#b9d6f2" /><path d="M4 15h15v3H4z" fill="#15244a" /><path d="M24 8L12 18" stroke="#c23b30" strokeWidth="2.500" /><path d="M12 17l-4 4 5-2z" fill="#444" /></svg> },
];

function Taskbar() {
  return (
    <footer className="flex h-12 flex-none items-stretch justify-between bg-linear-to-r from-[#d3dce5] via-[#d6dff9] via-40% to-[#d4dce6] pr-5 pl-[84px] font-['Open_Sans',sans-serif] text-xs text-[#202020]">
      <div className="flex">
        {TASKS.map((t) => (
          <button key={t.name} type="button" aria-label={t.name} className="relative flex w-11 flex-none items-center justify-center">
            {t.active && <span className="absolute top-1 bottom-1 left-1 w-9 rounded border border-white/60 bg-white/60" />}
            <span className="relative">{t.icon}</span>
            {t.dot && <span className="absolute bottom-[5px] left-[19px] h-[3px] w-1.5 rounded-full bg-[#7c8086]" />}
            {t.active && <span className="absolute bottom-[5px] left-3.5 h-[3px] w-4 rounded-full bg-[#0a7bd8]" />}
          </button>
        ))}
      </div>
      <div className="flex items-center">
        <svg width="12" height="7" viewBox="0 0 12 7" fill="none" stroke="#222" strokeWidth="1.500" aria-hidden="true"><path d="M.5 6.500L6 1l5.500 5.500" /></svg>
        <span className="ml-[11px]"><VLogo size={15} color="#7fd0f0" frame="#a9bfe0" /></span>
        <svg className="ml-2" width="16" height="10" viewBox="0 0 16 10" aria-hidden="true"><path d="M4 10a4 4 0 0 1 0-7 5 5 0 0 1 8 1 3 3 0 0 1 1 6z" fill="#1490df" /><path d="M4 3a5 5 0 0 1 8 1L7 6z" fill="#0a5cb0" /></svg>
        <svg className="ml-[9px]" width="16" height="15" viewBox="0 0 16 15" fill="none" stroke="#333" aria-hidden="true"><path d="M6.500 1.500h9v9h-10v-2M7.500 3.500h6v5h-6zM8 10.500v3M12 10.500v3M6 13.500h8" /><path d="M.5 4.500h5v4h-5zM1.500 4V2.500q1.500-2 3 0V4" fill="#fff" /></svg>
        <svg className="ml-3" width="16" height="11" viewBox="0 0 16 11" fill="none" stroke="#222" aria-hidden="true"><rect x=".5" y=".5" width="15" height="10" rx="1" /><path d="M3 3.500h10M3 5.500h10" strokeDasharray="1.500 1.200" /><path d="M4 8h8" /></svg>
        <span className="ml-5 w-[22px] text-[11px]">POL</span>
        <svg className="ml-[18px]" width="16" height="12" viewBox="0 0 16 12" fill="none" stroke="#222" strokeWidth="1.200" aria-hidden="true"><path d="M1 4.500q7-7 14 0M3.500 7q4.500-4.500 9 0M5.500 9.200q2.500-2.500 5 0" /><circle cx="8" cy="10.800" r="1" fill="#222" stroke="none" /></svg>
        <svg className="ml-2" width="16" height="14" viewBox="0 0 16 14" fill="none" stroke="#222" strokeWidth="1.100" aria-hidden="true"><path d="M.5 5H3l3-3v10L3 9H.5zM8.500 5q1.500 2 0 4M10.500 3q3.500 4 0 8M13 1.500q4 5.500 0 11" /></svg>
        <svg className="ml-2" width="16" height="13" viewBox="0 0 16 13" aria-hidden="true"><rect x="3.500" y="3.500" width="11" height="8" rx="1.500" fill="none" stroke="#111" /><path d="M5 5h8v5H5zM15 6h1v3h-1z" fill="#111" /><path d="M0 1.500h5v3L3.500 6v3h-2V6L0 4.500zM1 0h1v2H1zM3 0h1v2H3z" fill="#111" /></svg>
        <div className="ml-2.5 w-[60px] text-right leading-4">
          <div>20:28</div>
          <div>17.07.2022</div>
        </div>
        <span className="ml-2 flex size-4 items-center justify-center rounded-full bg-[#0a7bd8] text-[10px] text-white">3</span>
      </div>
    </footer>
  );
}

/* ---------- laptop ---------- */

function Foot() {
  return <span className="h-[3px] w-2.5 rounded-full bg-[#2e2e31]" />;
}

export default function App() {
  return (
    <div className="min-h-screen overflow-x-hidden bg-white pt-[111px] font-['DejaVu_Sans_Condensed','DejaVu_Sans',sans-serif] text-[11px] leading-[13px] text-[#26282c]">
      <div className="mx-[217px] overflow-hidden rounded-t-[57px] rounded-b-[20px] border-[7px] border-b-0 border-[#858688] bg-black">
        <div className="rounded-t-[50px] border-2 border-b-0 border-[#1c1c1e]">
          <div className="flex h-[50px] items-center justify-center pt-4 pr-[7px]">
            <span className="size-2 rounded-full border border-[#26262b] bg-[#101014]" />
          </div>
          <div className="relative mr-[51px] ml-[47px] flex aspect-[1424/800] flex-col overflow-hidden">
            <div className="relative min-h-0 flex-1">
              <BackWindow />
              <CompanyWindow />
            </div>
            <Taskbar />
          </div>
          <div className="h-12" />
          <div className="h-[42px] rounded-b-[16px] border-t-2 border-[#141416] bg-[#1e1f23]" />
        </div>
      </div>
      <div className="relative mr-[45px] ml-11">
        <div className="absolute inset-x-12 top-6 h-6 rounded-[50%] bg-black/60 blur-[6px]" />
        <div className="relative flex h-3 justify-center bg-linear-to-r from-[#3c3c40] via-[#aeaeb2] via-3% to-[#b8b8bc]">
          <div className="absolute inset-y-0 right-0 w-10 bg-linear-to-r from-[#b8b8bc00] to-[#3c3c40]" />
          <div className="relative z-10 h-[15px] w-[361px] rounded-b-[14px] bg-linear-to-r from-[#77777b] via-[#c6c6ca] via-6% to-[#c6c6ca]">
            <div className="absolute inset-y-0 right-0 w-5 rounded-br-[14px] bg-linear-to-r from-[#c6c6ca00] to-[#77777b]" />
          </div>
        </div>
        <div className="relative flex h-7 items-center justify-between rounded-[0_0_400px_400px/0_0_28px_28px] bg-linear-to-b from-[#55545a] via-[#6b6a72] via-20% to-[#2c2c2e] px-[179px] pt-1">
          <div className="flex w-[35%] justify-between"><Foot /><Foot /></div>
          <div className="flex w-[35%] justify-between"><Foot /><Foot /></div>
        </div>
      </div>
    </div>
  );
}
